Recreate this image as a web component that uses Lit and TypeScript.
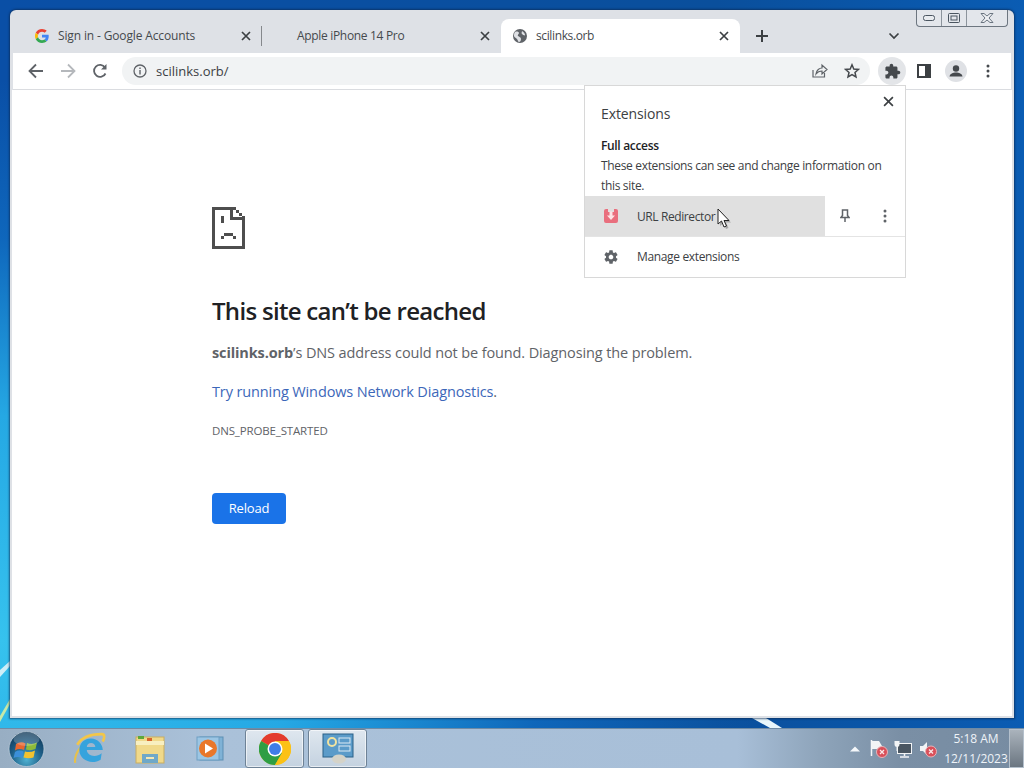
import { LitElement, html, css } from "lit";
import { customElement } from "lit/decorators.js";

const closeIcon = (s = 10, w = 1.7) => html`<svg width=${s} height=${s} viewBox="0 0 10 10"><path d="M1 1L9 9M9 1L1 9" stroke="#3c4043" stroke-width=${w} fill="none"/></svg>`;

@customElement("app-root")
export class AppRoot extends LitElement {
  static styles = css`
    :host { display: block; width: 1024px; height: 768px; overflow: hidden; font-family: "Open Sans", "Noto Sans", sans-serif; }
    * { box-sizing: border-box; }
    .desktop { position: relative; width: 1024px; height: 768px; display: flex; flex-direction: column;
      background: radial-gradient(ellipse 760px 560px at 0 640px, #36c2ee 0%, #25a8e4 40%, rgba(16,110,195,.75) 72%, rgba(10,85,170,0) 100%), linear-gradient(90deg, #0a4fa6 0%, #0a4f9c 70%, #0a5cb3 100%); }
    .wall { position: absolute; left: 0; right: 0; top: 0; height: 728px; }
    .window { position: absolute; left: 10px; top: 10px; width: 1004px; height: 708px; border-radius: 6px 6px 0 0;
      background: #dee1e6; box-shadow: 0 0 2px 1px rgba(10,40,80,.65); padding: 0 3px 2px 3px; display: flex; flex-direction: column; overflow: hidden; }
    .strip { height: 43px; flex: none; display: flex; align-items: flex-end; font-size: 12px; color: #45494d; position: relative; letter-spacing: -0.14px; }
    .tab { width: 238px; height: 34px; display: flex; align-items: center; flex: none; position: relative; }
    .tab.first { width: 249px; padding-left: 22px; }
    .tab.first .fav { width: 14px; height: 14px; margin-right: 9px; }
    .tab.second { padding-left: 35px; width: 239px; letter-spacing: -0.32px; }
    .tab.active { background: #fff; border-radius: 8px 8px 0 0; padding-left: 11px; width: 239px; letter-spacing: -0.38px; }
    .tab .fav { width: 16px; height: 16px; flex: none; margin-right: 8px; }
    .tab .title { flex: 1; white-space: nowrap; padding-bottom: 2px; }
    .tab .x { display: flex; margin-right: 11px; }
    .tab.first::after { content: ""; position: absolute; right: 0; top: 7px; height: 20px; width: 1px; background: #85888c; }
    .newtab { margin-left: 15px; display: flex; height: 34px; align-items: center; }
    .chev { margin-left: 119px; display: flex; height: 34px; align-items: center; }
    .controls { position: absolute; top: 0; right: 3px; width: 92px; height: 17px; border: 1px solid #6d7680; border-top: none; border-radius: 0 0 4px 4px;
      display: grid; grid-template-columns: 25px 25px 1fr; background: rgba(230,233,238,.6); }
    .controls div { display: flex; align-items: center; justify-content: center; border-right: 1px solid #8c949c; }
    .controls div:last-child { border-right: none; }
    .toolbar { height: 37px; flex: none; background: #fff; border-bottom: 1px solid #dadce0; display: flex; align-items: center; }
    .tbtn { width: 32px; height: 28px; display: flex; align-items: center; justify-content: center; flex: none; }
    .nav { margin-left: 7px; display: flex; }
    .omni { margin-left: 6px; width: 748px; height: 28px; border-radius: 14px; background: #f1f3f4; display: flex; align-items: center; padding-left: 11px; font-size: 13px; color: #3c4043; flex: none; }
    .omni .url { margin-left: 9px; }
    .omni .end { margin-left: auto; display: flex; padding-right: 2px; }
    .omni .end div { width: 32px; display: flex; justify-content: center; }
    .ext { width: 28px; height: 28px; border-radius: 50%; background: #e3e5e8; margin-left: 8px; display: flex; align-items: center; justify-content: center; flex: none; }
    .tools { display: flex; margin-left: 2px; }
    .page { flex: 1; background: #fff; margin: 0 -1px 0 -1px; padding: 117px 0 0 200px; color: #5f6368; font-size: 15px; position: relative; }
    .sad { display: block; width: 33px; height: 42px; }
    h1 { margin: 46px 0 0; font-size: 24px; line-height: 32px; font-weight: 600; color: #202124; letter-spacing: -0.7px; }
    .p1 { margin: 14px 0 0; line-height: 24px; font-size: 14.5px; letter-spacing: -0.12px; }
    .p1 b { font-weight: 700; }
    .p2 { margin: 15px 0 0; line-height: 24px; font-size: 14.5px; letter-spacing: -0.12px; }
    .p2 span { color: #3c67b9; }
    .code { margin-top: 19px; font-size: 11.5px; line-height: 16px; letter-spacing: -0.15px; }
    .reload { margin-top: 54px; width: 74px; height: 31px; background: #1a73e8; color: #fff; border-radius: 4px; font-size: 13px; display: flex; align-items: center; justify-content: center; letter-spacing: -0.2px; padding-bottom: 1px; }
    .popup { position: absolute; left: 584px; top: 85px; width: 322px; height: 193px; background: #fff; border: 1px solid #d8d8d8; color: #3c4043; font-size: 12px; display: flex; flex-direction: column; letter-spacing: -0.33px; }
    .popup .close { position: absolute; right: 11px; top: 10px; display: flex; }
    .popup .head { padding: 18px 16px 0; font-size: 14px; line-height: 20px; letter-spacing: -0.1px; }
    .popup .sec { padding: 12px 16px 0; line-height: 20px; }
    .popup .sec b { color: #202124; font-weight: 600; display: block; }
    .row { height: 41px; display: flex; align-items: center; border-bottom: 1px solid #e4e4e4; }
    .row .hov { width: 240px; height: 40px; background: #e0e0e0; display: flex; align-items: center; padding-left: 18px; letter-spacing: -0.4px; }
    .row .hov svg { margin-right: 18px; }
    .row .acts { display: flex; }
    .row .acts div { width: 40px; display: flex; justify-content: center; }
    .manage { height: 39px; display: flex; align-items: center; padding-left: 18px; letter-spacing: -0.35px; }
    .manage svg { margin-right: 18px; }
    .cursor { position: absolute; left: 717px; top: 208px; }
    .taskbar { position: absolute; left: 0; right: 0; bottom: 0; height: 40px; border-top: 1px solid #6f8ba5;
      background: linear-gradient(90deg, #98aec3 0%, #aac1d9 20%, #a8bfd8 72%, #8ea4ba 80%, #7a8fa5 88%, #778ca2 100%); display: flex; align-items: stretch; }
    .start { width: 60px; display: flex; align-items: center; padding-left: 8px; }
    .tb { width: 60px; display: flex; align-items: center; justify-content: center; flex: none; }
    .tb.on { background: linear-gradient(180deg, #dfe7ef, #c4d2e0); border: 1px solid #6e8296; border-radius: 3px; width: 59px; box-shadow: inset 0 0 0 1px rgba(255,255,255,.6); }
    .tb.chrome { margin-left: 5px; }
    .tb.panel { margin-left: 4px; }
    .tray { margin-left: auto; display: flex; align-items: center; }
    .tray svg { display: block; flex: none; }
    .clock { width: 66px; text-align: center; font-size: 12px; line-height: 20px; color: #eef3f8; margin-left: 4px; }
    .show { width: 15px; align-self: stretch; border: 1px solid #b4c0cc; background: linear-gradient(180deg, #aab3bc, #6b7681); }
    .ml8 { margin-left: 8px; } .ml6 { margin-left: 6px; } .ml4 { margin-left: 4px; }
  `;

  sadIcon() {
    const p = "#4e4e4e";
    return html`<svg class="sad" viewBox="0 0 34 43" preserveAspectRatio="none" shape-rendering="crispEdges">
      <path fill=${p} d="M0 0H22V3H3V40H31V12H34V43H0Z"/>
      <path fill=${p} d="M19 0H22V10H31V13H19Z"/>
      <path fill=${p} d="M22 0H25V3H28V6H31V9H34V13H31V9H28V6H25V3H22Z"/>
      <rect fill=${p} x="9" y="9" width="3" height="7"/>
      <rect fill=${p} x="9" y="30" width="3" height="3"/><rect fill=${p} x="12" y="27" width="10" height="3"/><rect fill=${p} x="22" y="30" width="3" height="3"/>
    </svg>`;
  }

  render() {
    return html`<div class="desktop">
      <svg class="wall" viewBox="0 0 1024 728" width="1024" height="728">
        <path d="M0 670L10 661V666L0 677Z" fill="#cdeef8"/>
        <path d="M0 716L10 699V704L0 722Z" fill="#c6e8a8"/>
        <path d="M752 718H766L782 728H770Z" fill="#e8f6fb"/>
      </svg>
      <div class="window">
        <div class="strip">
          <div class="tab first">
            <svg class="fav" viewBox="0 0 48 48"><path fill="#EA4335" d="M24 9.500c3.500 0 6.700 1.200 9.200 3.600l6.900-6.900C35.900 2.400 30.500 0 24 0 14.600 0 6.500 5.400 2.600 13.200l8 6.200C12.500 13.700 17.800 9.500 24 9.500z"/><path fill="#4285F4" d="M47 24.500c0-1.600-.1-3.100-.4-4.500H24v9h12.900c-.6 3-2.200 5.500-4.700 7.200l7.700 6c4.500-4.200 7.100-10.300 7.100-17.700z"/><path fill="#FBBC05" d="M10.500 28.600c-.5-1.500-.8-3-.8-4.600s.3-3.100.8-4.600l-8-6.200C.9 16.500 0 20.100 0 24s.9 7.500 2.600 10.800z"/><path fill="#34A853" d="M24 48c6.500 0 11.900-2.100 15.900-5.800l-7.700-6c-2.200 1.500-4.900 2.300-8.200 2.300-6.200 0-11.500-4.200-13.400-9.900l-8 6.200C6.500 42.600 14.600 48 24 48z"/></svg>
            <span class="title">Sign in - Google Accounts</span>
            <span class="x">${closeIcon()}</span>
          </div>
          <div class="tab second"><span class="title">Apple iPhone 14 Pro</span><span class="x">${closeIcon()}</span></div>
          <div class="tab active">
            <svg class="fav" viewBox="0 0 16 16"><circle cx="8" cy="8" r="7" fill="#5f6368"/><path d="M3 4c2-1 4 0 4 1S5 7 6 8s3 1 3 3-1 3-2 3-1-2-2-3-3-2-3-3 0-3 1-4zM10 3c2 1 3 3 3 4s-2 0-3-1 0-2 0-3z" fill="#dfe1e5"/></svg>
            <span class="title">scilinks.orb</span>
            <span class="x">${closeIcon()}</span>
          </div>
          <div class="newtab"><svg width="14" height="14" viewBox="0 0 14 14"><path d="M7 1V13M1 7H13" stroke="#3c4043" stroke-width="2"/></svg></div>
          <div class="chev"><svg width="12" height="8" viewBox="0 0 12 8"><path d="M1.500 1.500L6 6L10.500 1.500" stroke="#3c4043" stroke-width="1.700" fill="none"/></svg></div>
          <div class="controls">
            <div><svg width="12" height="7" viewBox="0 0 12 7"><rect x=".5" y=".5" width="11" height="5" rx="2" fill="#e8ebef" stroke="#4a5560"/></svg></div>
            <div><svg width="12" height="10" viewBox="0 0 12 10"><rect x=".5" y=".5" width="11" height="9" rx="1" fill="none" stroke="#4a5560"/><rect x="3" y="3" width="6" height="4" fill="none" stroke="#4a5560"/></svg></div>
            <div><svg width="14" height="10" viewBox="0 0 14 10"><path d="M1 .5H4L7 3L10 .5H13L9 5L13 9.500H10L7 7L4 9.500H1L5 5Z" fill="#eef0f3" stroke="#6a7480"/></svg></div>
          </div>
        </div>
        <div class="toolbar">
          <div class="nav">
            <div class="tbtn"><svg width="16" height="16" viewBox="0 0 16 16"><path d="M15 8H2M8 1.500L1.500 8L8 14.500" stroke="#5f6368" stroke-width="1.800" fill="none"/></svg></div>
            <div class="tbtn"><svg width="16" height="16" viewBox="0 0 16 16"><path d="M1 8H14M8 1.500L14.500 8L8 14.500" stroke="#b5b8bc" stroke-width="1.800" fill="none"/></svg></div>
            <div class="tbtn"><svg width="16" height="16" viewBox="0 0 16 16"><path d="M13.500 10.500A6 6 0 1 1 13 4.500" stroke="#5f6368" stroke-width="1.800" fill="none"/><path d="M14.500 1V6.500H9Z" fill="#5f6368"/></svg></div>
          </div>
          <div class="omni">
            <svg width="14" height="14" viewBox="0 0 14 14"><circle cx="7" cy="7" r="6" fill="none" stroke="#5f6368" stroke-width="1.300"/><rect x="6.300" y="6" width="1.400" height="4.500" fill="#5f6368"/><rect x="6.300" y="3.500" width="1.400" height="1.500" fill="#5f6368"/></svg>
            <span class="url">scilinks.orb/</span>
            <div class="end">
              <div><svg width="16" height="15" viewBox="0 0 16 15"><path d="M1 7V14H12.500V10" fill="none" stroke="#5f6368" stroke-width="1.200"/><path d="M4 11C4.500 7 7.500 5 10 5V2L15 6.500L10 11V8C7.500 8 5.500 9 4 11Z" fill="none" stroke="#5f6368" stroke-width="1.200"/></svg></div>
              <div><svg width="16" height="16" viewBox="0 0 16 16"><path d="M8 1.800L9.800 6L14.500 6.400L11 9.500L12 14L8 11.700L4 14L5 9.500L1.500 6.400L6.200 6Z" fill="none" stroke="#45494d" stroke-width="1.500"/></svg></div>
            </div>
          </div>
          <div class="ext"><svg width="17" height="17" viewBox="0 0 24 24"><path fill="#45494d" d="M20.500 11H19V7c0-1.100-.9-2-2-2h-4V3.500C13 2.120 11.880 1 10.500 1S8 2.120 8 3.500V5H4c-1.100 0-1.990.9-1.990 2v3.800H3.500c1.490 0 2.700 1.210 2.700 2.700s-1.210 2.700-2.700 2.700H2V20c0 1.100.9 2 2 2h3.800v-1.500c0-1.490 1.210-2.700 2.700-2.700s2.700 1.210 2.700 2.700V22H17c1.100 0 2-.9 2-2v-4h1.500c1.380 0 2.500-1.120 2.500-2.500S21.880 11 20.500 11z"/></svg></div>
          <div class="tools">
            <div class="tbtn"><svg width="14" height="14" viewBox="0 0 14 14"><rect x="1" y="1" width="12" height="12" fill="none" stroke="#3c4043" stroke-width="2"/><rect x="8" y="1" width="5" height="12" fill="#3c4043"/></svg></div>
            <div class="tbtn"><svg width="22" height="22" viewBox="0 0 22 22"><circle cx="11" cy="11" r="11" fill="#dfe1e5"/><circle cx="11" cy="8.500" r="3.200" fill="#45494d"/><path d="M4.500 16.500C5 13.500 8 12.500 11 12.500S17 13.500 17.500 16.500Z" fill="#45494d"/></svg></div>
            <div class="tbtn"><svg width="4" height="14" viewBox="0 0 4 14"><circle cx="2" cy="2" r="1.500" fill="#45494d"/><circle cx="2" cy="7" r="1.500" fill="#45494d"/><circle cx="2" cy="12" r="1.500" fill="#45494d"/></svg></div>
          </div>
        </div>
        <div class="page">
          ${this.sadIcon()}
          <h1>This site can’t be reached</h1>
          <p class="p1"><b>scilinks.orb</b>’s DNS address could not be found. Diagnosing the problem.</p>
          <p class="p2"><span>Try running Windows Network Diagnostics</span>.</p>
          <div class="code">DNS_PROBE_STARTED</div>
          <div class="reload">Reload</div>
        </div>
      </div>
      <div class="popup">
        <div class="close">${closeIcon(11, 1.5)}</div>
        <div class="head">Extensions</div>
        <div class="sec"><b>Full access</b>These extensions can see and change information on this site.</div>
        <div class="row">
          <div class="hov">
            <svg width="16" height="16" viewBox="0 0 16 16"><path d="M1 3Q1 1 3 1H5V4H11V1H13Q15 1 15 3V13Q15 15 13 15H3Q1 15 1 13Z" fill="#e96f7e"/><path d="M6.500 3.500H9.500V7.500H12L8 12L4 7.500H6.500Z" fill="#fde4e6"/></svg>
            <span>URL Redirector</span>
          </div>
          <div class="acts">
            <div><svg width="10" height="13" viewBox="0 0 10 13"><path d="M2.500 1H7.500V6.500L9 8.500H1L2.500 6.500Z" fill="none" stroke="#5f6368" stroke-width="1.500"/><path d="M5 8V13" stroke="#5f6368" stroke-width="1.500"/></svg></div>
            <div><svg width="4" height="14" viewBox="0 0 4 14"><circle cx="2" cy="2" r="1.500" fill="#5f6368"/><circle cx="2" cy="7" r="1.500" fill="#5f6368"/><circle cx="2" cy="12" r="1.500" fill="#5f6368"/></svg></div>
          </div>
        </div>
        <div class="manage">
          <svg width="16" height="16" viewBox="0 0 24 24"><path fill="#5f6368" d="M19.430 12.980c.04-.32.07-.64.07-.98s-.03-.66-.07-.98l2.110-1.650c.19-.15.24-.42.12-.64l-2-3.460c-.12-.22-.39-.3-.61-.22l-2.490 1c-.52-.4-1.080-.73-1.690-.98l-.38-2.650C14.460 2.180 14.250 2 14 2h-4c-.25 0-.46.18-.49.420l-.38 2.650c-.61.25-1.170.59-1.690.98l-2.490-1c-.23-.09-.49 0-.61.220l-2 3.460c-.13.220-.07.490.12.640l2.110 1.650c-.04.320-.07.650-.07.980s.03.660.07.980l-2.110 1.650c-.19.150-.24.420-.12.640l2 3.460c.12.220.39.300.61.220l2.490-1c.52.400 1.080.730 1.690.980l.38 2.650c.03.240.24.420.49.420h4c.25 0 .46-.18.49-.42l.38-2.650c.61-.25 1.170-.59 1.690-.98l2.490 1c.23.090.49 0 .61-.22l2-3.460c.12-.22.070-.49-.12-.64l-2.110-1.650zM12 15.500c-1.930 0-3.500-1.570-3.500-3.500s1.570-3.500 3.500-3.500 3.500 1.570 3.500 3.500-1.570 3.500-3.500 3.500z"/></svg>
          <span>Manage extensions</span>
        </div>
      </div>
      <svg class="cursor" width="15" height="22" viewBox="0 0 15 22"><path d="M3 3V18L6.500 15L9 21L11.500 20L9 14.500H14Z" fill="#000" opacity=".25"/><path d="M1 1V16L4.500 13L7 19L9.500 18L7 12.500H12Z" fill="#fff" stroke="#222" stroke-width="1"/></svg>
      <div class="taskbar">
        <div class="start"><svg width="38" height="38" viewBox="0 0 38 38">
          <defs><radialGradient id="orb" cx=".5" cy=".8" r=".75"><stop offset="0" stop-color="#4fb2d2"/><stop offset=".6" stop-color="#1d5d86"/><stop offset="1" stop-color="#123c5c"/></radialGradient></defs>
          <circle cx="18.500" cy="19" r="17.500" fill="url(#orb)" stroke="#c5d2dd" stroke-opacity=".7"/>
          <path d="M8 14Q13 11 17.500 13.500L16 20Q11 18 7 20.500Z" fill="#e8662f"/>
          <path d="M19 13Q24 15 29 12.500L27.500 19Q23 21 18 19.500Z" fill="#8dbb3a"/>
          <path d="M7 22Q11 19.500 15.500 21.500L14 28Q10 26 5.500 28Z" fill="#3b8fd9"/>
          <path d="M17 21.500Q22 23 27 20.500L25.500 27.500Q21 29 15.500 27.500Z" fill="#f2c230"/>
          <ellipse cx="18.500" cy="9" rx="13" ry="7" fill="#fff" opacity=".22"/>
        </svg></div>
        <div class="tb"><svg width="34" height="34" viewBox="0 0 32 32"><path d="M4 12C8 5 16 2 27 2C30 2 30 5 28 9" fill="none" stroke="#f2c64a" stroke-width="2.500"/><path d="M2 29C1 22 6 14 12 9" fill="none" stroke="#e7c14a" stroke-width="2"/><path d="M6 17C6 10 11 6 17 6S28 11 28 17H13C13 22 21 25 27 20L26 26C18 31 6 27 6 17ZM13 14H21C21 9 13 9 13 14Z" fill="#35a3dd"/></svg></div>
        <div class="tb"><svg width="32" height="32" viewBox="0 0 32 32"><rect x="2" y="4" width="28" height="26" fill="#f0d98a" stroke="#c9ad61"/><path d="M2 8H30V12H2Z" fill="#f8efc0"/><rect x="4" y="3" width="6" height="3" fill="#5ea83a"/><rect x="13" y="5" width="5" height="3" fill="#d8642c"/><rect x="8" y="21" width="16" height="9" fill="#6fa8c8"/><rect x="12" y="24" width="8" height="2" fill="#f3e7b5"/></svg></div>
        <div class="tb"><svg width="28" height="28" viewBox="0 0 28 28"><rect x="4" y="2" width="23" height="23" fill="#7fb2d6" stroke="#5d8fb4"/><rect x="1" y="2" width="22" height="23" fill="#9cc6e4" stroke="#6f9fc4"/><circle cx="12" cy="13.500" r="9" fill="#e9772a"/><path d="M9 8.500L17 13.500L9 18.500Z" fill="#fff"/></svg></div>
        <div class="tb on chrome"><svg width="32" height="32" viewBox="0 0 32 32"><circle cx="16" cy="16" r="16" fill="#fbc116"/><path d="M16 16L2.100 8A16 16 0 0 1 29.900 8H16Z" fill="#e33b2e"/><path d="M2.100 8A16 16 0 0 0 16 32L23 20Z" fill="#2f9e44"/><path d="M29.900 8H16L23 20L16 32A16 16 0 0 0 29.900 8Z" fill="#fbc116"/><circle cx="16" cy="16" r="7.500" fill="#fff"/><circle cx="16" cy="16" r="6" fill="#3f7de8"/></svg></div>
        <div class="tb on panel"><svg width="34" height="32" viewBox="0 0 34 32"><rect x="2" y="1" width="30" height="23" fill="#5b9bc9" stroke="#2a6187"/><circle cx="11" cy="9" r="4" fill="none" stroke="#f1e3a0" stroke-width="2"/><rect x="18" y="5" width="11" height="5" fill="none" stroke="#dceaf4"/><rect x="18" y="13" width="11" height="5" fill="none" stroke="#dceaf4"/><ellipse cx="18" cy="26" rx="7" ry="4.500" fill="#d5d3c8"/></svg></div>
        <div class="tray">
          <svg width="12" height="8" viewBox="0 0 12 8"><path d="M6 1.500L11 6.500H1Z" fill="#f4f7fa"/></svg>
          <svg class="ml8" width="20" height="20" viewBox="0 0 20 20"><path d="M2.500 1V17" stroke="#f4f6f8" stroke-width="1.500"/><path d="M3 2H10L13 7V10H3Z" fill="#f2f4f6"/><circle cx="13" cy="13" r="5.500" fill="#d9505a" stroke="#e8b3b8"/><path d="M11 11L15 15M15 11L11 15" stroke="#fbe8e8" stroke-width="1.300"/></svg>
          <svg class="ml4" width="20" height="20" viewBox="0 0 20 20"><rect x="4.500" y="4.500" width="14" height="10" fill="#4a5662" stroke="#f2f4f6"/><path d="M1.500 2V5Q1.500 8 4 8T6.500 5V2" fill="#f2f4f6"/><path d="M4 8V12" stroke="#f2f4f6"/><path d="M11.500 15V17M7 18H16" stroke="#f2f4f6" stroke-width="1.500"/></svg>
          <svg class="ml6" width="20" height="20" viewBox="0 0 20 20"><path d="M1 7H4L8 3V16L4 12H1Z" fill="#f2f4f6"/><circle cx="12" cy="12.500" r="5.500" fill="#d9505a" stroke="#e8b3b8"/><path d="M10 10.500L14 14.500M14 10.500L10 14.500" stroke="#fbe8e8" stroke-width="1.300"/></svg>
          <div class="clock">5:18 AM<br>12/11/2023</div>
          <div class="show"></div>
        </div>
      </div>
    </div>`;
  }
}
